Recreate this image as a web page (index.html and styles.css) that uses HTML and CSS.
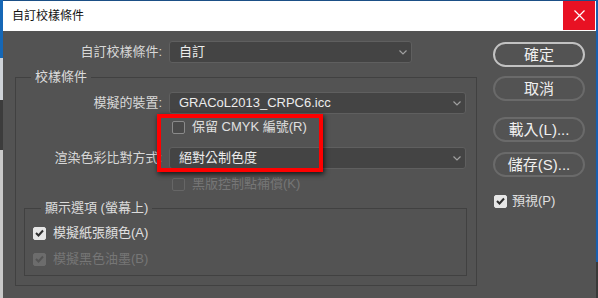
FILE: index.html
```html
<!DOCTYPE html>
<html lang="zh-Hant">
<head>
<meta charset="utf-8">
<title>自訂校樣條件</title>
<link rel="stylesheet" href="styles.css">
</head>
<body>
<div class="screen">
  <div class="edge edge-left"></div>
  <div class="window">
    <div class="titlebar">
      <span class="title">自訂校樣條件</span>
      <div class="close">
        <svg width="11" height="11" viewBox="0 0 11 11"><path d="M0.5 0.5 L10.5 10.5 M10.5 0.5 L0.5 10.5" stroke="#ffffff" stroke-width="1.2" fill="none"/></svg>
      </div>
    </div>
    <div class="content">
      <div class="main">
        <div class="row">
          <span class="label label-wide">自訂校樣條件:</span>
          <div class="select select-short">
            <span>自訂</span>
            <svg class="chev" width="8" height="5" viewBox="0 0 8 5"><path d="M0.5 0.5 L4 4 L7.5 0.5" stroke="#a0a0a0" stroke-width="1.2" fill="none"/></svg>
          </div>
        </div>
        <fieldset class="group outer">
          <legend>校樣條件</legend>
          <div class="row first">
            <span class="label">模擬的裝置:</span>
            <div class="select">
              <span>GRACoL2013_CRPC6.icc</span>
              <svg class="chev" width="8" height="5" viewBox="0 0 8 5"><path d="M0.5 0.5 L4 4 L7.5 0.5" stroke="#a0a0a0" stroke-width="1.2" fill="none"/></svg>
            </div>
          </div>
          <div class="check indent cmyk">
            <span class="box"></span>
            <span>保留 CMYK 編號(R)</span>
          </div>
          <div class="row intent">
            <span class="label">渲染色彩比對方式:</span>
            <div class="select">
              <span>絕對公制色度</span>
              <svg class="chev" width="8" height="5" viewBox="0 0 8 5"><path d="M0.5 0.5 L4 4 L7.5 0.5" stroke="#a0a0a0" stroke-width="1.2" fill="none"/></svg>
            </div>
          </div>
          <div class="check indent disabled bpc">
            <span class="box"></span>
            <span>黑版控制點補償(K)</span>
          </div>
          <fieldset class="group inner">
            <legend>顯示選項 (螢幕上)</legend>
            <div class="check checked paper">
              <span class="box"><svg width="9" height="8" viewBox="0 0 9 8"><path d="M1 4 L3.5 6.5 L8 1.5" stroke="#2e2e2e" stroke-width="2" fill="none"/></svg></span>
              <span>模擬紙張顏色(A)</span>
            </div>
            <div class="check checked disabled ink">
              <span class="box"><svg width="9" height="8" viewBox="0 0 9 8"><path d="M1 4 L3.5 6.5 L8 1.5" stroke="#545454" stroke-width="2" fill="none"/></svg></span>
              <span>模擬黑色油墨(B)</span>
            </div>
          </fieldset>
        </fieldset>
      </div>
      <div class="side">
        <div class="btn btn-default">確定</div>
        <div class="btn btn-cancel">取消</div>
        <div class="btn btn-load">載入(L)...</div>
        <div class="btn btn-save">儲存(S)...</div>
        <div class="check checked preview">
          <span class="box"><svg width="9" height="8" viewBox="0 0 9 8"><path d="M1 4 L3.5 6.5 L8 1.5" stroke="#2e2e2e" stroke-width="2" fill="none"/></svg></span>
          <span>預視(P)</span>
        </div>
      </div>
      <div class="highlight"></div>
    </div>
  </div>
  <div class="edge edge-right"></div>
</div>
</body>
</html>
```

FILE: styles.css
```css
* { box-sizing: border-box; }

html, body {
  margin: 0;
  padding: 0;
}

body {
  width: 598px;
  height: 298px;
  overflow: hidden;
  background: #535353;
  font-family: "Liberation Sans", "Noto Sans CJK TC", sans-serif;
  font-size: 13px;
  color: #d8d8d8;
}

.screen {
  display: flex;
  width: 598px;
  height: 298px;
  background: #1b4f86;
}

.edge-left {
  width: 3px;
  background: linear-gradient(to bottom,
    #1567b6 0px, #1567b6 58px,
    #cfd3d8 58px, #cfd3d8 100px,
    #3c3c3c 100px, #3c3c3c 150px,
    #c9c9c9 150px, #c9c9c9 298px);
}

.edge-right {
  width: 2px;
  background: linear-gradient(to bottom,
    #1a5fae 0px, #1a5fae 262px,
    #3a3a3a 262px, #3a3a3a 298px);
}

.window {
  flex: 1;
  display: flex;
  flex-direction: column;
  margin-top: 1px;
  background: #535353;
}

.titlebar {
  height: 30px;
  background: #ffffff;
  display: flex;
  align-items: flex-start;
  justify-content: space-between;
}

.title {
  font-size: 12px;
  line-height: 30px;
  color: #111111;
  padding-left: 9px;
}

.close {
  width: 32px;
  height: 29px;
  margin-right: 1px;
  background: #e81123;
  display: flex;
  align-items: center;
  justify-content: center;
}

.content {
  position: relative;
  flex: 1;
  display: flex;
  align-items: flex-start;
}

.main {
  width: 474px;
  padding-top: 10px;
}

.row {
  display: flex;
  align-items: center;
  gap: 7px;
  height: 22px;
}

.label {
  width: 146px;
  text-align: right;
  line-height: 22px;
  white-space: nowrap;
}

.label-wide {
  width: 159px;
}

.select {
  width: 297px;
  height: 22px;
  background: #444444;
  border: 1px solid #5f5f5f;
  border-radius: 3px;
  display: flex;
  align-items: center;
  justify-content: space-between;
  padding: 0 4px 0 9px;
  color: #ececec;
  line-height: 20px;
}

.select-short {
  width: 243px;
}

.chev {
  display: block;
}

.group {
  min-width: 0;
  margin: 0;
  padding: 0;
  border: 1px solid #414141;
}

.group legend {
  padding: 0 4px;
  line-height: 18px;
  color: #dcdcdc;
}

.outer {
  margin: 5px 0 0 12px;
  width: 462px;
  padding-bottom: 9px;
}

.outer > legend {
  margin-left: 15px;
}

.outer > .row.first {
  margin-top: 6px;
}

.check {
  display: flex;
  align-items: center;
  gap: 7px;
  height: 18px;
  line-height: 18px;
  color: #e0e0e0;
  white-space: nowrap;
}

.check .box {
  width: 13px;
  height: 13px;
  border: 1px solid #8a8a8a;
  border-radius: 2px;
  background: #4a4a4a;
  display: flex;
  align-items: center;
  justify-content: center;
}

.check.checked .box {
  border-color: #e6e6e6;
  background: #e6e6e6;
}

.check.disabled {
  color: #767676;
}

.check.disabled .box {
  border-color: #666666;
  background: #525252;
}

.check.checked.disabled .box {
  border-color: #6c6c6c;
  background: #6c6c6c;
}

.indent {
  margin-left: 156px;
}

.cmyk {
  margin-top: 4px;
}

.intent {
  margin-top: 11px;
}

.bpc {
  margin-top: 6px;
}

.inner {
  margin: 6px 0 0 8px;
  width: 443px;
  padding-bottom: 7px;
}

.inner > legend {
  margin-left: 16px;
}

.inner .check {
  margin-left: 8px;
}

.paper {
  margin-top: 7px;
}

.ink {
  margin-top: 8px;
}

.side {
  margin-left: 16px;
  width: 92px;
  padding-top: 11px;
  display: flex;
  flex-direction: column;
}

.btn {
  height: 25px;
  border: 2px solid #6a6a6a;
  border-radius: 13px;
  display: flex;
  align-items: center;
  justify-content: center;
  color: #f0f0f0;
  font-size: 15px;
  line-height: 21px;
}

.btn-default {
  border-color: #c2c2c2;
}

.btn-cancel {
  margin-top: 9px;
}

.btn-load {
  margin-top: 16px;
}

.btn-save {
  margin-top: 10px;
}

.preview {
  margin-top: 15px;
  margin-left: 1px;
  gap: 5px;
}

.highlight {
  position: absolute;
  left: 154px;
  top: 83px;
  width: 166px;
  height: 58px;
  border: 4px solid #ff0000;
  box-shadow: 1px 2px 5px rgba(0, 0, 0, 0.75);
  pointer-events: none;
}
```
